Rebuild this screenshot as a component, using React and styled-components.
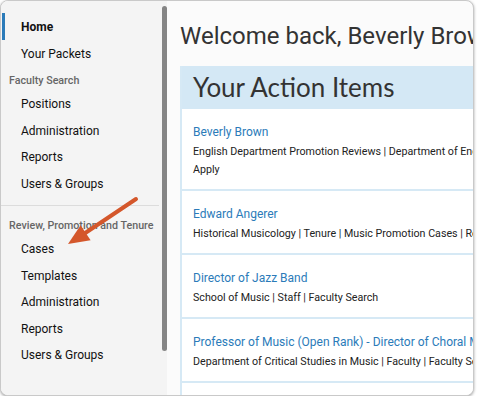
import React from 'react';
import styled, { createGlobalStyle } from 'styled-components';

const GlobalStyle = createGlobalStyle`
  html, body {
    margin: 0;
    padding: 0;
    background: #fff;
    font-family: Roboto, "Liberation Sans", Arial, sans-serif;
  }
`;

const Frame = styled.div`
  position: relative;
  width: 474px;
  height: 396px;
  box-sizing: border-box;
  border: 1px solid #c9c9c9;
  border-radius: 8px;
  overflow: hidden;
  box-shadow: 0 1px 3px rgba(0, 0, 0, 0.35);
  display: flex;
  background: #fbfbfb;
`;

const Sidebar = styled.nav`
  position: relative;
  width: 166px;
  flex-shrink: 0;
  background: #f4f4f4;
  padding-top: 13px;
  padding-right: 8px;
  box-sizing: border-box;
`;

const Scrollbar = styled.div`
  position: absolute;
  top: 5px;
  right: 0;
  width: 5px;
  height: 345px;
  border-radius: 3px;
  background: #858585;
`;

const NavItem = styled.div`
  position: relative;
  height: 26.5px;
  line-height: 26.5px;
  padding-left: 20px;
  font-size: 12px;
  color: #111;
  font-weight: ${(p) => (p.$active ? 700 : 400)};

  &::before {
    content: '';
    display: ${(p) => (p.$active ? 'block' : 'none')};
    position: absolute;
    left: 1px;
    top: -1px;
    width: 3px;
    height: 100%;
    background: #2b7bb9;
  }
`;

const SectionTitle = styled.div`
  padding-top: ${(p) => p.$top}px;
  padding-left: 8px;
  height: 20px;
  line-height: 20px;
  font-size: 10.7px;
  font-weight: 500;
  color: #666;
`;

const Divider = styled.hr`
  margin: 8px 0 0;
  border: none;
  border-top: 1px solid #dcdcdc;
`;

const Main = styled.main`
  flex: 1;
  display: flex;
  flex-direction: column;
  padding: 14px 0 0 13px;
  min-width: 0;
`;

const Welcome = styled.h1`
  margin: 0;
  height: 42px;
  line-height: 42px;
  font-size: 24px;
  font-weight: 400;
  color: #333;
  white-space: nowrap;
`;

const Card = styled.section`
  flex: 1;
  margin-top: 9px;
  width: 400px;
  border-left: 2px solid #d6e9f5;
  background: #fff;
`;

const CardHeader = styled.div`
  height: 43px;
  line-height: 43px;
  padding-left: 11px;
  background: #d4e8f5;
  font-family: Lato, "Open Sans", sans-serif;
  font-size: 26px;
  color: #333;
  white-space: nowrap;
`;

const Item = styled.div`
  padding: 14px 0 10px 11px;
  border-bottom: 2px solid #d6e9f5;
  white-space: nowrap;
`;

const ItemLink = styled.a`
  display: block;
  line-height: 18px;
  font-size: 12px;
  color: #2b7bb9;
  text-decoration: none;
`;

const Meta = styled.div`
  line-height: 18px;
  font-size: 10.7px;
  color: #222;
  margin-top: ${(p) => p.$gap || 0}px;
`;

const Arrow = styled.svg`
  position: absolute;
  left: 0;
  top: 0;
  pointer-events: none;
`;

const items = [
  {
    title: 'Beverly Brown',
    meta: ['English Department Promotion Reviews | Department of English', 'Apply'],
  },
  {
    title: 'Edward Angerer',
    meta: ['Historical Musicology | Tenure | Music Promotion Cases | Review'],
  },
  {
    title: 'Director of Jazz Band',
    meta: ['School of Music | Staff | Faculty Search'],
  },
  {
    title: 'Professor of Music (Open Rank) - Director of Choral Music',
    meta: ['Department of Critical Studies in Music | Faculty | Faculty Search'],
  },
];

export default function App() {
  return (
    <>
      <GlobalStyle />
      <Frame>
        <Sidebar>
          <NavItem $active>Home</NavItem>
          <NavItem>Your Packets</NavItem>
          <SectionTitle $top={4}>Faculty Search</SectionTitle>
          <NavItem>Positions</NavItem>
          <NavItem>Administration</NavItem>
          <NavItem>Reports</NavItem>
          <NavItem>Users &amp; Groups</NavItem>
          <Divider />
          <SectionTitle $top={10}>Review, Promotion and Tenure</SectionTitle>
          <NavItem>Cases</NavItem>
          <NavItem>Templates</NavItem>
          <NavItem>Administration</NavItem>
          <NavItem>Reports</NavItem>
          <NavItem>Users &amp; Groups</NavItem>
          <Scrollbar />
        </Sidebar>
        <Main>
          <Welcome>Welcome back, Beverly Brown</Welcome>
          <Card>
            <CardHeader>Your Action Items</CardHeader>
            {items.map((it) => (
              <Item key={it.title}>
                <ItemLink href="#">{it.title}</ItemLink>
                {it.meta.map((m, i) => (
                  <Meta key={m} $gap={i === 0 ? 2 : 0}>
                    {m}
                  </Meta>
                ))}
              </Item>
            ))}
          </Card>
        </Main>
        <Arrow width="474" height="396" viewBox="0 0 474 396">
          <line x1="135" y1="198" x2="82" y2="233.5" stroke="#d4572b" strokeWidth="4" strokeLinecap="round" />
          <polygon points="67,243 79.6,224.3 89.6,239.3" fill="#d4572b" />
        </Arrow>
      </Frame>
    </>
  );
}
